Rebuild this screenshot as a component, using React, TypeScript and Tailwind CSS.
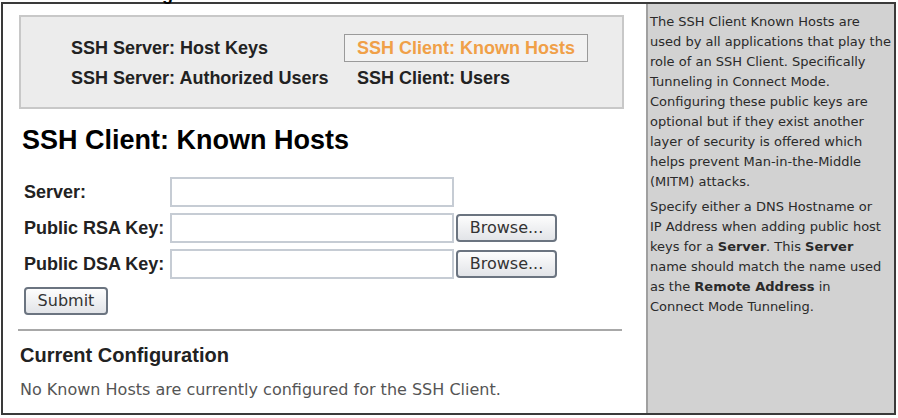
import React from "react";

const dv = { fontFamily: '"DejaVu Sans", "Liberation Sans", sans-serif' };
const ls = { fontFamily: '"Liberation Sans", Arial, sans-serif' };

const btn =
  "border-2 border-[#6b7480] rounded-[4px] bg-gradient-to-b from-[#fdfdfd] to-[#e2e4e8] text-[16px] font-normal text-[#333]";

export default function App() {
  return (
    <div className="w-[898px] h-[418px] bg-white overflow-hidden relative">
      <div className="absolute left-[162px] top-[-15px] text-[18px] leading-[18px] font-bold text-black" style={ls}>g</div>
      <div className="mt-[2px] ml-[1px] w-[895px] h-[413px] border-2 border-[#3a3a3a] flex bg-white">
        <main className="w-[643px] flex flex-col">
          <div className="mt-[11px] ml-[16px] w-[605px] h-[94px] bg-[#ececec] border-2 border-[#c8c8c8] grid grid-cols-[273px_1fr] content-start pt-[16px] pl-[50px] text-[18px] font-bold text-[#222]" style={ls}>
            <div className="h-[30px] flex items-center">SSH Server: Host Keys</div>
            <div className="h-[30px] flex items-center">
              <span className="border border-[#9a9a9a] bg-[#f2f2f2] px-[12px] h-[28px] flex items-center text-[#f0a048]">SSH Client: Known Hosts</span>
            </div>
            <div className="h-[30px] flex items-center">SSH Server: Authorized Users</div>
            <div className="h-[30px] flex items-center pl-[13px]">SSH Client: Users</div>
          </div>
          <h1 className="mt-[15px] ml-[19px] text-[27px] font-bold text-black leading-[32px]" style={ls}>SSH Client: Known Hosts</h1>
          <div className="mt-[21px] ml-[21px] grid grid-cols-[146px_auto_auto] gap-y-[6px] items-center justify-start text-[18px] font-bold text-[#222]" style={ls}>
            <div>Server:</div>
            <div className="w-[284px] h-[30px] border-2 border-[#c6ccd4] bg-white"></div>
            <div></div>
            <div>Public RSA Key:</div>
            <div className="w-[284px] h-[30px] border-2 border-[#c6ccd4] bg-white"></div>
            <button className={`ml-[2px] w-[101px] h-[28px] ${btn}`} style={dv}>Browse...</button>
            <div>Public DSA Key:</div>
            <div className="w-[284px] h-[30px] border-2 border-[#c6ccd4] bg-white"></div>
            <button className={`ml-[2px] w-[101px] h-[28px] ${btn}`} style={dv}>Browse...</button>
          </div>
          <div className="ml-[21px] mt-[8px]">
            <button className={`w-[84px] h-[28px] ${btn}`} style={dv}>Submit</button>
          </div>
          <div className="mt-[14px] ml-[15px] w-[604px] h-[2px] bg-[#a8a8a8]"></div>
          <h2 className="mt-[12px] ml-[17px] text-[20px] font-bold text-[#222] leading-[24px]" style={ls}>Current Configuration</h2>
          <p className="mt-[13px] ml-[17px] text-[16px] text-[#555] leading-[20px]" style={dv}>No Known Hosts are currently configured for the SSH Client.</p>
        </main>
        <aside className="flex-1 bg-[#d2d2d2] border-l-2 border-[#a0a0a0] pl-[2px] pt-[8px] text-[13px] leading-[20px] text-[#2a2a2a]" style={dv}>
          <p>
            The SSH Client Known Hosts are<br />
            used by all applications that play the<br />
            role of an SSH Client. Specifically<br />
            Tunneling in Connect Mode.<br />
            Configuring these public keys are<br />
            optional but if they exist another<br />
            layer of security is offered which<br />
            helps prevent Man-in-the-Middle<br />
            (MITM) attacks.
          </p>
          <p className="mt-[5px]">
            Specify either a DNS Hostname or<br />
            IP Address when adding public host<br />
            keys for a <b>Server</b>. This <b>Server</b><br />
            name should match the name used<br />
            as the <b>Remote Address</b> in<br />
            Connect Mode Tunneling.
          </p>
        </aside>
      </div>
    </div>
  );
}
